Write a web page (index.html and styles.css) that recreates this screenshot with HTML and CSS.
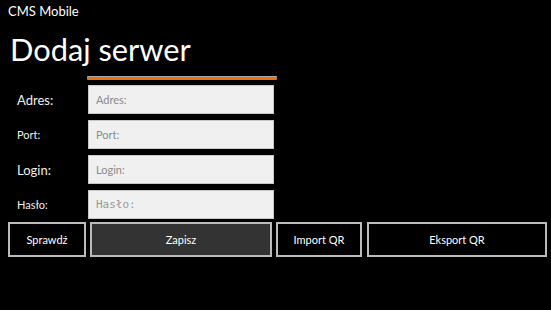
FILE: index.html
```html
<!DOCTYPE html>
<html lang="pl">
<head>
  <meta charset="UTF-8">
  <title>CMS Mobile</title>
  <link rel="stylesheet" href="styles.css">
</head>
<body>

  <div class="app-title">CMS Mobile</div>
  <h1>Dodaj serwer</h1>

  <!-- server form -->
  <div class="form">
    <div></div>
    <div class="focus-line"></div>

    <label class="big">Adres:</label>
    <div class="field">Adres:</div>

    <label>Port:</label>
    <div class="field">Port:</div>

    <label class="big">Login:</label>
    <div class="field">Login:</div>

    <label>Hasło:</label>
    <div class="field mono">Hasło:</div>
  </div>

  <div class="buttons">
    <button class="b-check">Sprawdź</button>
    <button class="b-save">Zapisz</button>
    <button class="b-import">Import QR</button>
    <button class="b-export">Eksport QR</button>
  </div>

</body>
</html>
```

FILE: styles.css
```css
body {
  margin: 0;
  background: #000;
  color: #fff;
  font-family: Lato, "Open Sans", sans-serif;
}
.app-title {
  font-size: 13px;
  padding: 3px 0 0 8px;
  height: 15px;
}
h1 {
  font-size: 30.8px;
  font-weight: normal;
  margin: 14px 0 0 10px;
  line-height: 36px;
  height: 44px;
}
.form {
  display: grid;
  grid-template-columns: 88px 186px;
  row-gap: 6px;
}
.focus-line {
  margin-left: -1px;
  width: 190px;
  height: 3px;
  border-top: 1px solid #aaa;
  background: #e8720c;
  border-radius: 1px;
  margin-bottom: -1px;
}
label {
  font-size: 11px;
  padding-left: 17px;
  display: flex;
  align-items: center;
  color: #eee;
}
label.big {
  font-size: 13px;
}
.field {
  height: 27px;
  background: #f0f0f0;
  border: 1px solid #c8c8c8;
  color: #8a8a8a;
  font-size: 11px;
  display: flex;
  align-items: center;
  padding-left: 7px;
}
.field.mono {
  font-family: "DejaVu Sans Mono", monospace;
  font-size: 11px;
  color: #999;
}
.buttons {
  display: flex;
  gap: 4px;
  margin-top: 3px;
  padding-left: 8px;
}
button {
  height: 35px;
  background: #000;
  color: #fff;
  border: 2px solid #bbb;
  font-family: Lato, sans-serif;
  font-size: 11px;
  padding: 0;
}
.b-check { width: 78px; }
.b-save { width: 182px; background: #333; }
.b-import { width: 86px; }
.b-export { width: 180px; margin-left: 1px; }
```
